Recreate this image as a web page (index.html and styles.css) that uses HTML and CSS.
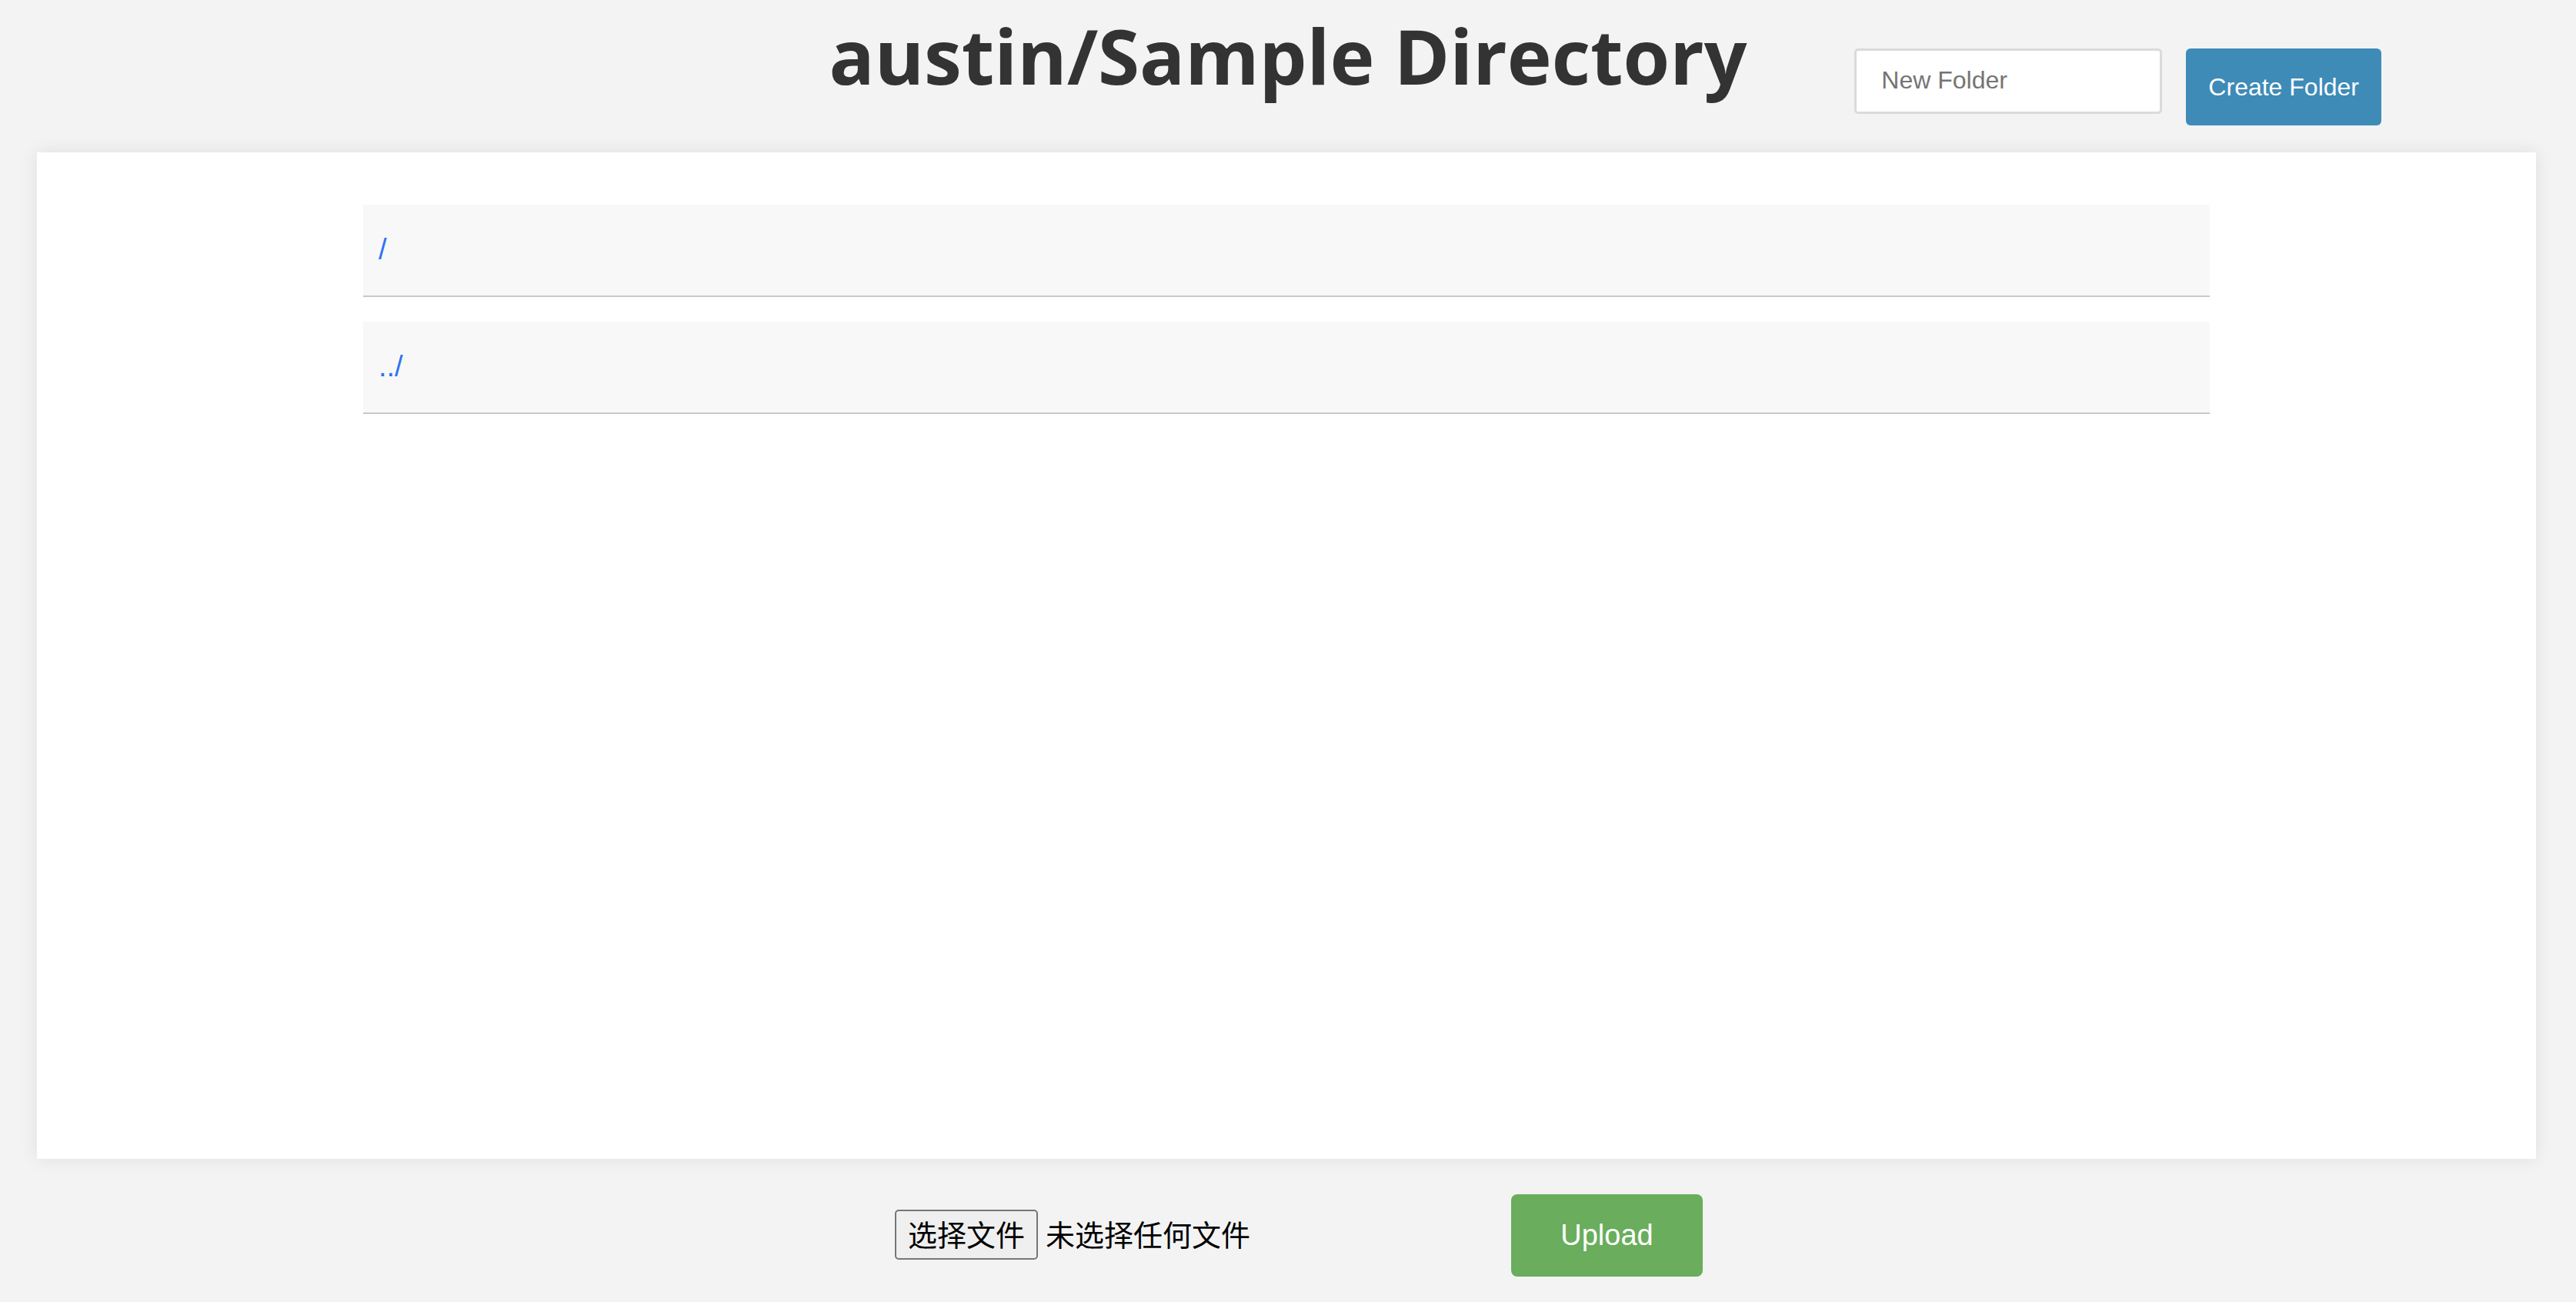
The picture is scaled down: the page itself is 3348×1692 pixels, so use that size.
FILE: index.html
```html
<!DOCTYPE html>
<html lang="zh-CN">
<head>
<meta charset="utf-8">
<title>austin/Sample Directory</title>
<link rel="stylesheet" href="styles.css">
</head>
<body>
<header class="top">
  <h1 class="title">austin/Sample Directory</h1>
  <form class="new-folder">
    <input class="folder-input" type="text" placeholder="New Folder">
    <button class="btn-create" type="button">Create Folder</button>
  </form>
</header>
<main class="panel">
  <ul class="listing">
    <li class="entry"><a class="entry-link" href="#">/</a></li>
    <li class="entry"><a class="entry-link" href="#">../</a></li>
  </ul>
</main>
<footer class="uploader">
  <div class="file-field">
    <span class="file-btn">选择文件</span>
    <span class="file-status">未选择任何文件</span>
  </div>
  <button class="btn-upload" type="button">Upload</button>
</footer>
</body>
</html>
```
FILE: styles.css
```css
html, body {
  margin: 0;
  padding: 0;
}
body {
  background: #f3f3f3;
  width: 3348px;
  height: 1692px;
  overflow: hidden;
  font-family: "Liberation Sans", Arial, sans-serif;
}
.top {
  display: grid;
  grid-template-columns: 1fr auto 1fr;
  height: 198px;
  box-sizing: border-box;
}
.title {
  grid-column: 2;
  margin: 0;
  padding-top: 5px;
  font-family: "Open Sans", sans-serif;
  font-weight: 700;
  font-size: 98px;
  line-height: 134px;
  color: #333333;
  white-space: nowrap;
}
.new-folder {
  grid-column: 3;
  justify-self: end;
  margin: 0;
  padding: 63px 253px 0 0;
  display: flex;
  align-items: flex-start;
  gap: 31px;
}
.folder-input {
  box-sizing: border-box;
  width: 400px;
  height: 85px;
  border: 3px solid #dadada;
  border-radius: 5px;
  background: #ffffff;
  padding: 0 0 2px 32px;
  font-family: "Liberation Sans", Arial, sans-serif;
  font-size: 32px;
  color: #333;
  outline: none;
}
.folder-input::placeholder {
  color: #757575;
}
.btn-create {
  box-sizing: border-box;
  height: 100px;
  padding: 0 29px;
  border: none;
  border-radius: 6px;
  background: #3e8bb8;
  color: #ffffff;
  font-family: "Liberation Sans", Arial, sans-serif;
  font-size: 32px;
}
.panel {
  display: block;
  box-sizing: border-box;
  margin: 0 52px 0 48px;
  height: 1308px;
  padding-top: 68px;
  background: #ffffff;
  box-shadow: 0 0 22px rgba(0, 0, 0, 0.085);
}
.listing {
  list-style: none;
  margin: 0 auto;
  padding: 0;
  width: 2400px;
  display: flex;
  flex-direction: column;
  gap: 32px;
}
.entry {
  box-sizing: border-box;
  height: 120px;
  padding: 0 0 2px 20px;
  display: flex;
  align-items: center;
  background: #f8f8f8;
  border-bottom: 2px solid #c9c9c9;
}
.entry-link {
  font-family: "Liberation Sans", Arial, sans-serif;
  font-size: 38px;
  color: #2f72f1;
  text-decoration: none;
}
.uploader {
  box-sizing: border-box;
  height: 186px;
  padding: 13px 0 0 28px;
  display: flex;
  justify-content: center;
  align-items: center;
  gap: 31px;
}
.file-field {
  width: 770px;
  margin-bottom: 2px;
  display: flex;
  align-items: center;
  gap: 10px;
  font-family: "Noto Sans CJK SC", sans-serif;
  font-size: 38px;
  line-height: 1;
  color: #000000;
}
.file-btn {
  box-sizing: border-box;
  height: 65px;
  padding: 0 15px 4px;
  display: flex;
  align-items: center;
  background: #efefef;
  border: 2px solid #767676;
  border-radius: 5px;
}
.file-status {
  white-space: nowrap;
  padding-bottom: 4px;
}
.btn-upload {
  box-sizing: border-box;
  height: 107px;
  width: 249px;
  border: none;
  border-radius: 8px;
  background: #69ad5d;
  color: #ffffff;
  font-family: "Liberation Sans", Arial, sans-serif;
  font-size: 38px;
}
```
